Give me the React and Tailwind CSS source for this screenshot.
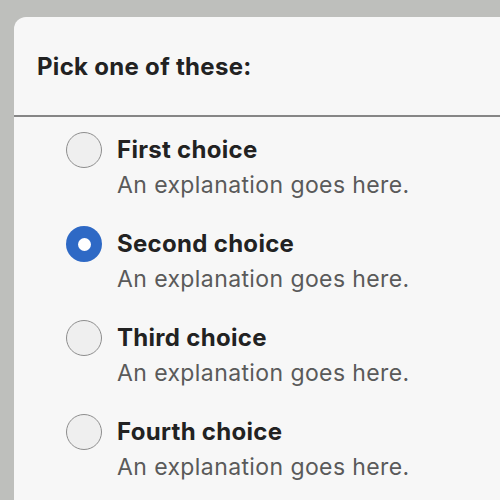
const choices = [
  { id: 1, title: 'First choice', checked: false },
  { id: 2, title: 'Second choice', checked: true },
  { id: 3, title: 'Third choice', checked: false },
  { id: 4, title: 'Fourth choice', checked: false },
]

function Radio({ checked }) {
  if (checked) {
    return (
      <span className="flex h-9 w-9 shrink-0 items-center justify-center rounded-full bg-[#2e69c5]">
        <span className="h-[13px] w-[13px] rounded-full bg-white" />
      </span>
    )
  }
  return <span className="h-9 w-9 shrink-0 rounded-full border border-[#8e8e8e] bg-[#efefef]" />
}

export default function App() {
  return (
    <div
      className="h-[500px] w-[500px] overflow-hidden bg-[#bebfbc] pl-[14px] pt-[17px]"
      style={{ fontFamily: 'Inter, "Noto Sans", sans-serif' }}
    >
      <div className="h-[520px] w-[520px] rounded-tl-[12px] bg-[#f7f7f7]">
        {/* Header */}
        <div className="border-b-2 border-[#868686] pb-[34px] pl-[23px] pt-[36px]">
          <h2 className="text-[24px] font-bold leading-[28px] tracking-[0.3px] text-[#222]">Pick one of these:</h2>
        </div>

        {/* Options */}
        <div className="flex flex-col gap-[24px] pl-[52px] pt-[15px]">
          {choices.map((choice) => (
            <div key={choice.id}>
              <div className="flex items-center gap-[15px]">
                <Radio checked={choice.checked} />
                <span className="text-[24px] font-bold leading-[30px] tracking-[0.3px] text-[#222]">
                  {choice.title}
                </span>
              </div>
              <p className="pl-[51px] text-[23px] leading-[34px] tracking-[0.4px] text-[#5a5a5a]">
                An explanation goes here.
              </p>
            </div>
          ))}
        </div>
      </div>
    </div>
  )
}
